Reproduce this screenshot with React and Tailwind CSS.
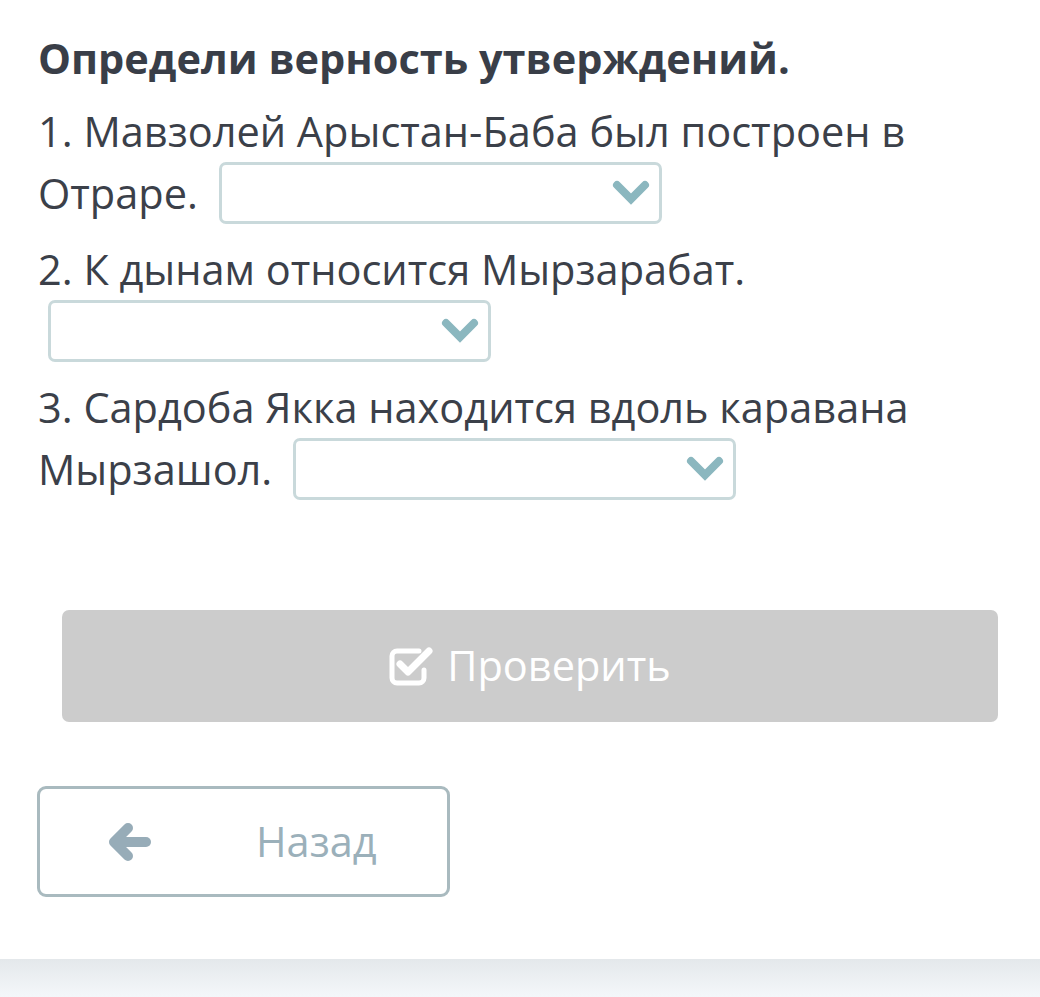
import React from "react";

function Chevron() {
  return (
    <svg width="38" height="26" viewBox="0 0 38 26" className="block">
      <polyline
        points="5,5 19,19 33,5"
        fill="none"
        stroke="#8bb7bf"
        strokeWidth="8"
        strokeLinecap="round"
        strokeLinejoin="miter"
      />
    </svg>
  );
}

function Select() {
  return (
    <span className="inline-flex align-top ml-[10px] w-[443px] h-[62px] border-[3px] border-[#c9d9db] rounded-[7px] bg-white items-center justify-end pr-[9px]">
      <Chevron />
    </span>
  );
}

function CheckIcon() {
  return (
    <svg width="46" height="40" viewBox="0 0 46 40" className="block">
      <path
        d="M30 5 H8 a5 5 0 0 0 -5 5 V32 a5 5 0 0 0 5 5 H30 a5 5 0 0 0 5 -5 V24"
        fill="none"
        stroke="white"
        strokeWidth="5"
        strokeLinecap="round"
        strokeLinejoin="round"
      />
      <path
        d="M11 18 L19 26 L40 5"
        fill="none"
        stroke="white"
        strokeWidth="7"
        strokeLinecap="round"
        strokeLinejoin="round"
      />
    </svg>
  );
}

function ArrowLeft() {
  return (
    <svg width="44" height="38" viewBox="0 0 44 38" className="block ml-[68px]">
      <polyline
        points="20,5 6,19 20,33"
        fill="none"
        stroke="#97acb8"
        strokeWidth="10"
        strokeLinecap="round"
        strokeLinejoin="round"
      />
      <line x1="8" y1="19" x2="38" y2="19" stroke="#97acb8" strokeWidth="10" strokeLinecap="round" />
    </svg>
  );
}

export default function App() {
  return (
    <div
      className="w-[1040px] h-[997px] bg-white flex flex-col overflow-hidden"
      style={{ fontFamily: '"Open Sans", "Noto Sans", sans-serif' }}
    >
      <div className="px-[38px] pt-[33px] text-[#3b4049]">
        <h1 className="font-bold text-[41.5px] leading-[50px] text-[#393e48] mb-[17px]">
          Определи верность утверждений.
        </h1>
        <p className="text-[41.5px] leading-[62px] mb-[14px]">
          1. Мавзолей Арыстан-Баба был построен в Отраре. <Select />
        </p>
        <p className="text-[41.5px] leading-[62px] mb-[14px]">
          2. К дынам относится Мырзарабат. <Select />
        </p>
        <p className="text-[41.5px] leading-[62px]">
          3. Сардоба Якка находится вдоль каравана Мырзашол. <Select />
        </p>
      </div>

      <div className="mt-[110px] ml-[62px] mr-[42px] h-[112px] rounded-[7px] bg-[#cccccc] flex items-center justify-center gap-[12px] text-white">
        <CheckIcon />
        <span className="text-[41.5px] leading-none">Проверить</span>
      </div>

      <div className="mt-[64px] ml-[37px] w-[413px] h-[111px] border-[3px] border-[#a9babf] rounded-[9px] flex items-center">
        <ArrowLeft />
        <span className="ml-[104px] text-[41.5px] leading-none text-[#9bb0ba]">Назад</span>
      </div>

      <div className="flex-1" />
      <div className="h-[38px] bg-gradient-to-b from-[#e4e8eb] to-[#f4f7fa]" />
    </div>
  );
}
